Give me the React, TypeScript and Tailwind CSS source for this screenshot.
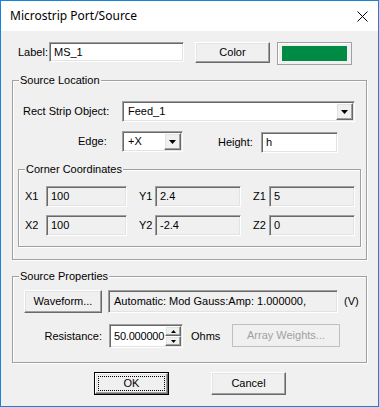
import React from "react";

const sunken =
  "border border-t-[#a0a0a0] border-l-[#a0a0a0] border-r-white border-b-white shadow-[inset_1px_1px_0_#696969,inset_-1px_-1px_0_#e3e3e3]";
const raised =
  "border border-t-white border-l-white border-r-[#696969] border-b-[#696969] shadow-[inset_-1px_-1px_0_#a0a0a0,inset_1px_1px_0_#e3e3e3] bg-[#f0f0f0]";

function Arrow({ className = "" }: { className?: string }) {
  return (
    <svg width="7" height="4" viewBox="0 0 7 4" className={className}>
      <path d="M0 0H7L3.5 4Z" fill="#000" />
    </svg>
  );
}

function Combo({ w, value }: { w: string; value: string }) {
  return (
    <div className={`${sunken} ${w} h-[21px] bg-white flex items-stretch p-[1px]`}>
      <div className="flex-1 pl-[4px] leading-[17px] text-[11px]">{value}</div>
      <div className={`${raised} w-[17px] flex items-center justify-center`}>
        <Arrow />
      </div>
    </div>
  );
}

function Group({
  title,
  className,
  children,
}: {
  title: string;
  className: string;
  children: React.ReactNode;
}) {
  return (
    <div className={`relative border border-[#a0a0a0] shadow-[inset_1px_1px_0_#fff,1px_1px_0_#fff] ${className}`}>
      <span className="absolute -top-[8px] left-[6px] bg-[#f0f0f0] px-[1px] leading-[14px] text-[11px]">
        {title}
      </span>
      {children}
    </div>
  );
}

function Coord({ label, value, lw, iw, ml }: { label: string; value: string; lw: string; iw: string; ml?: string }) {
  return (
    <div className={`flex items-start ${ml ?? ""}`}>
      <div className={`${lw} leading-[21px]`}>{label}</div>
      <div className={`${sunken} ${iw} h-[21px] bg-[#f0f0f0] pl-[4px] leading-[19px]`}>{value}</div>
    </div>
  );
}

export default function App() {
  return (
    <div
      className="w-[379px] h-[407px] border border-[#1883d7] bg-[#f0f0f0] text-[11px] text-black flex flex-col overflow-hidden"
      style={{ fontFamily: '"Liberation Sans", Arial, sans-serif' }}
    >
      {/* Title bar */}
      <div className="h-[30px] bg-white flex items-center justify-between pl-[9px] pr-[10px]">
        <span className="text-[12px] leading-[16px]" style={{ fontFamily: '"Noto Sans", "Liberation Sans", sans-serif' }}>
          Microstrip Port/Source
        </span>
        <svg width="11" height="11" viewBox="0 0 11 11">
          <path d="M0.5 0.5L10.5 10.5M10.5 0.5L0.5 10.5" stroke="#000" strokeWidth="1" />
        </svg>
      </div>

      {/* Label row */}
      <div className="mt-[11px] flex items-start pl-[17px]">
        <div className="w-[31px] leading-[20px]">Label:</div>
        <div className={`${sunken} w-[135px] h-[20px] bg-white pl-[4px] leading-[18px]`}>MS_1</div>
        <button className={`${raised} ml-[11px] w-[75px] h-[21px] leading-[19px] text-[11px]`}>Color</button>
        <div className="ml-[7px] w-[75px] h-[23px] border border-[#a0a0a0] bg-[#f0f0f0] p-[3px] px-[4px] shadow-[inset_1px_1px_0_#fff]">
          <div className="w-full h-full bg-[#008b45]" />
        </div>
      </div>

      {/* Source Location */}
      <Group title="Source Location" className="mt-[15px] ml-[11px] w-[355px] h-[180px]">
        <div className="pt-[20px] pl-[10px] flex items-start">
          <div className="w-[99px] leading-[21px]">Rect Strip Object:</div>
          <Combo w="w-[233px]" value="Feed_1" />
        </div>
        <div className="mt-[9px] pl-[10px] flex items-start">
          <div className="w-[99px] pl-[55px] leading-[21px]">Edge:</div>
          <Combo w="w-[61px]" value="+X" />
          <div className="ml-[35px] w-[43px] leading-[23px]">Height:</div>
          <div className={`${sunken} mt-[1px] w-[77px] h-[21px] bg-white pl-[4px] leading-[19px]`}>h</div>
        </div>
        <Group title="Corner Coordinates" className="mt-[15px] ml-[5px] w-[343px] h-[78px]">
          <div className="pt-[16px] pl-[6px] flex flex-col gap-[8px]">
            <div className="flex items-start">
              <Coord label="X1" value="100" lw="w-[21px]" iw="w-[81px]" />
              <Coord label="Y1" value="2.4" lw="w-[16px]" iw="w-[86px]" ml="ml-[12px]" />
              <Coord label="Z1" value="5" lw="w-[16px]" iw="w-[86px]" ml="ml-[12px]" />
            </div>
            <div className="flex items-start">
              <Coord label="X2" value="100" lw="w-[21px]" iw="w-[81px]" />
              <Coord label="Y2" value="-2.4" lw="w-[16px]" iw="w-[86px]" ml="ml-[12px]" />
              <Coord label="Z2" value="0" lw="w-[16px]" iw="w-[86px]" ml="ml-[12px]" />
            </div>
          </div>
        </Group>
      </Group>

      {/* Source Properties */}
      <Group title="Source Properties" className="mt-[16px] ml-[11px] w-[355px] h-[87px]">
        <div className="pt-[13px] pl-[11px] flex items-start">
          <button className={`${raised} w-[78px] h-[23px] leading-[21px] text-[11px]`}>Waveform...</button>
          <div className={`${sunken} ml-[6px] w-[230px] h-[23px] bg-[#f0f0f0] pl-[5px] leading-[21px]`}>
            Automatic: Mod Gauss:Amp: 1.000000,
          </div>
          <div className="ml-[6px] leading-[23px]">(V)</div>
        </div>
        <div className="mt-[11px] flex items-start">
          <div className="w-[96px] text-right pr-[7px] leading-[24px]">Resistance:</div>
          <div className={`${sunken} w-[74px] h-[24px] bg-white flex items-stretch p-[1px]`}>
            <div className="flex-1 overflow-hidden whitespace-nowrap pl-[3px] leading-[20px] tracking-[-0.2px]">50.000000</div>
            <div className="w-[16px] flex flex-col">
              <div className={`${raised} flex-1 flex items-center justify-center`}>
                <svg width="5" height="3" viewBox="0 0 5 3"><path d="M2.5 0L5 3H0Z" fill="#000" /></svg>
              </div>
              <div className={`${raised} flex-1 flex items-center justify-center`}>
                <svg width="5" height="3" viewBox="0 0 5 3"><path d="M0 0H5L2.5 3Z" fill="#000" /></svg>
              </div>
            </div>
          </div>
          <div className="ml-[8px] w-[41px] leading-[24px]">Ohms</div>
          <button className="w-[108px] h-[23px] border border-[#bfbfbf] bg-[#f0f0f0] text-[#a0a0a0] leading-[21px] text-[11px]">
            Array Weights...
          </button>
        </div>
      </Group>

      {/* Buttons */}
      <div className="mt-[9px] pl-[93px] flex items-start">
        <button className="w-[75px] h-[23px] border border-black bg-[#f0f0f0] p-0">
          <div className={`${raised} w-full h-full p-[2px]`}>
            <div className="w-full h-full border border-dotted border-black leading-[13px] text-[11px]">OK</div>
          </div>
        </button>
        <button className={`${raised} ml-[42px] w-[75px] h-[23px] leading-[21px] text-[11px]`}>Cancel</button>
      </div>
    </div>
  );
}
